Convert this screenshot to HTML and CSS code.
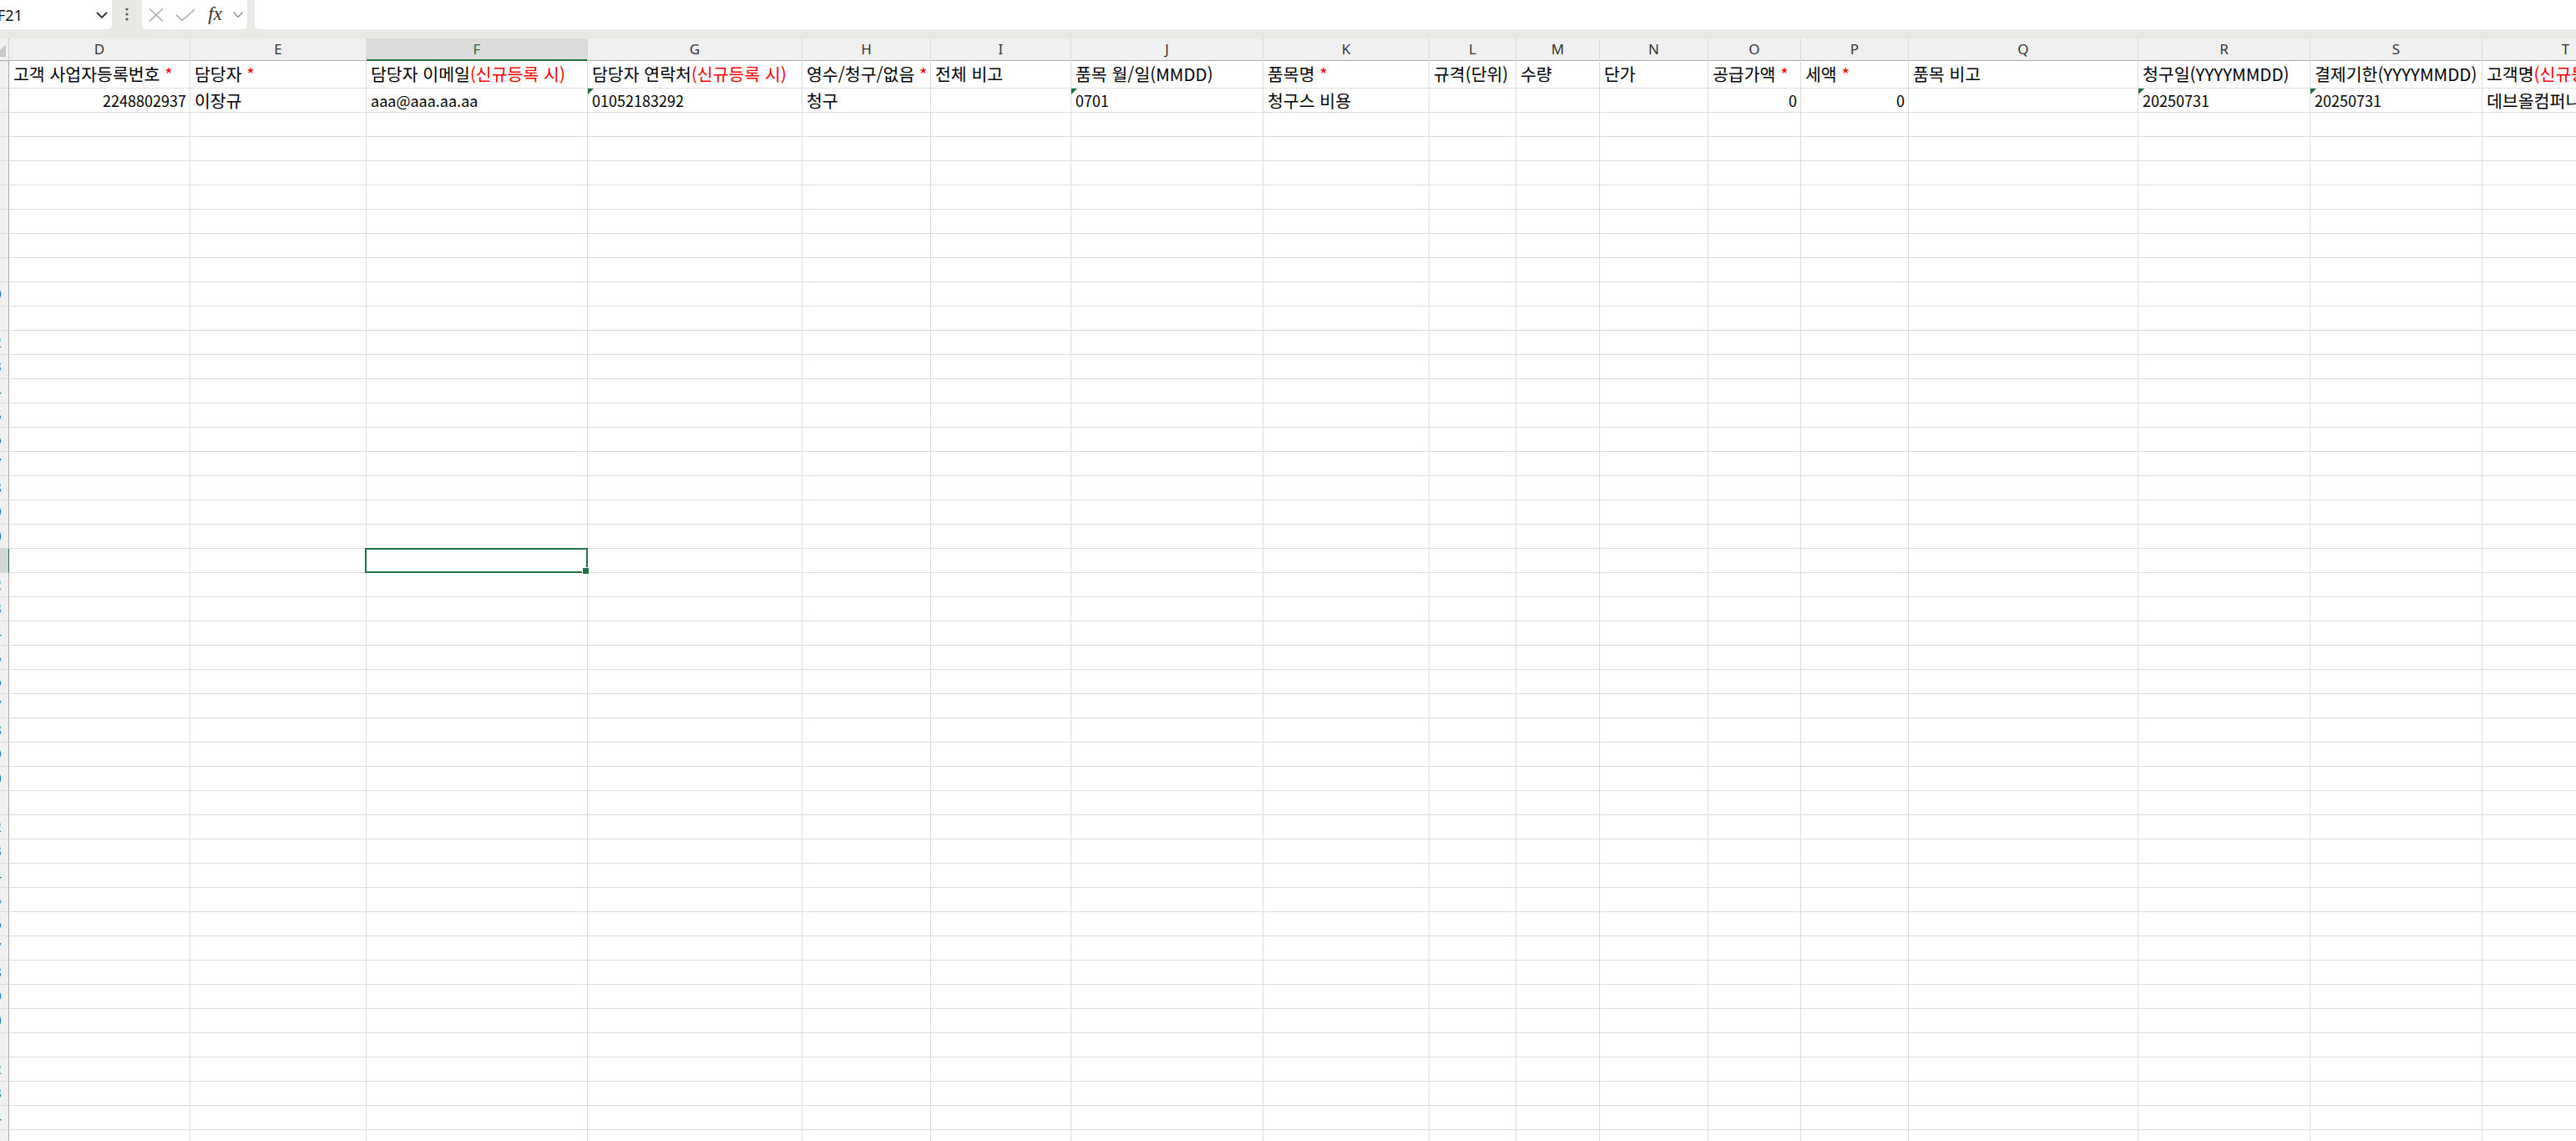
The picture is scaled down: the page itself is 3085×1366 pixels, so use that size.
FILE: index.html
```html
<!DOCTYPE html>
<html lang="ko">
    <head>
        <meta charset="UTF-8" />
        <title>청구 업로드 - Excel</title>
        <meta name="viewport" content="width=device-width, initial-scale=1.0" />
        <link rel="stylesheet" href="styles.css">
    </head>
    <body>
        <div class="formula-bar">
            <div class="name-box">
                <span class="name-box-ref">F21</span>
                <svg class="name-box-arrow" viewBox="0 0 14 8" width="14" height="8">
                    <path d="M1 1l6 6 6-6" />
                </svg>
            </div>
            <div class="bar-grip">
                <svg viewBox="0 0 4 16" width="4" height="16">
                    <circle cx="2" cy="2" r="1.6" />
                    <circle cx="2" cy="8" r="1.6" />
                    <circle cx="2" cy="14" r="1.6" />
                </svg>
            </div>
            <div class="fx-buttons">
                <span class="fx-btn">
                    <svg viewBox="0 0 18 16" width="18" height="16">
                        <path d="M1 0.5l16 15M17 0.5l-16 15" />
                    </svg>
                </span>
                <span class="fx-btn">
                    <svg viewBox="0 0 24 14" width="24" height="14">
                        <path d="M1 6.5l7 7 15-13" />
                    </svg>
                </span>
                <span class="fx-btn fx-label">fx</span>
                <span class="fx-btn fx-more">
                    <svg viewBox="0 0 12 7" width="12" height="7">
                        <path d="M0.5 0.5l5.5 6 5.5-6" />
                    </svg>
                </span>
            </div>
            <div class="formula-input"></div>
        </div>

        <div class="sheet">
            <div class="row col-heads">
                <div class="corner"></div>
                <div class="col-head">D</div>
                <div class="col-head">E</div>
                <div class="col-head active">F</div>
                <div class="col-head">G</div>
                <div class="col-head">H</div>
                <div class="col-head">I</div>
                <div class="col-head">J</div>
                <div class="col-head">K</div>
                <div class="col-head">L</div>
                <div class="col-head">M</div>
                <div class="col-head">N</div>
                <div class="col-head">O</div>
                <div class="col-head">P</div>
                <div class="col-head">Q</div>
                <div class="col-head">R</div>
                <div class="col-head">S</div>
                <div class="col-head">T</div>
            </div>

            <div class="row row-title">
                <div class="row-head"><span>1</span></div>
                <div class="cell">고객 사업자등록번호 <span class="req">*</span></div>
                <div class="cell">담당자 <span class="req">*</span></div>
                <div class="cell">담당자 이메일<span class="req">(신규등록 시)</span></div>
                <div class="cell">담당자 연락처<span class="req">(신규등록 시)</span></div>
                <div class="cell">영수/청구/없음 <span class="req">*</span></div>
                <div class="cell">전체 비고</div>
                <div class="cell">품목 월/일(MMDD)</div>
                <div class="cell">품목명 <span class="req">*</span></div>
                <div class="cell">규격(단위)</div>
                <div class="cell">수량</div>
                <div class="cell">단가</div>
                <div class="cell">공급가액 <span class="req">*</span></div>
                <div class="cell">세액 <span class="req">*</span></div>
                <div class="cell">품목 비고</div>
                <div class="cell">청구일(YYYYMMDD)</div>
                <div class="cell">결제기한(YYYYMMDD)</div>
                <div class="cell">고객명<span class="req">(신규등록 시)</span></div>
            </div>

            <div class="row">
                <div class="row-head"><span>2</span></div>
                <div class="cell num">2248802937</div>
                <div class="cell">이장규</div>
                <div class="cell latin">aaa@aaa.aa.aa</div>
                <div class="cell as-text">01052183292</div>
                <div class="cell">청구</div>
                <div class="cell"></div>
                <div class="cell as-text">0701</div>
                <div class="cell">청구스 비용</div>
                <div class="cell"></div>
                <div class="cell"></div>
                <div class="cell"></div>
                <div class="cell num">0</div>
                <div class="cell num">0</div>
                <div class="cell"></div>
                <div class="cell as-text">20250731</div>
                <div class="cell as-text">20250731</div>
                <div class="cell">데브올컴퍼니</div>
            </div>
        </div>

        <script src="script.js"></script>
    </body>
</html>
```

FILE: styles.css
```css
* {
    margin: 0;
    padding: 0;
    box-sizing: border-box;
}

html,
body {
    height: 100%;
    overflow: hidden;
    background: #fff;
}

body {
    font-family: "Noto Sans CJK KR", "Noto Sans", sans-serif;
    color: #000;
}

/* formula bar */

.formula-bar {
    display: flex;
    align-items: flex-start;
    height: 46px;
    background: #e7eae4;
}

.name-box {
    display: flex;
    align-items: center;
    justify-content: space-between;
    width: 141px;
    height: 35px;
    margin-left: -7px;
    padding: 0 5px 0 4px;
    background: #fff;
    border-radius: 0 0 6px 6px;
}

.name-box-ref {
    font-family: "Noto Sans", sans-serif;
    font-size: 18px;
    color: #111;
}

.name-box-arrow path {
    fill: none;
    stroke: #333;
    stroke-width: 1.8;
}

.bar-grip {
    display: flex;
    justify-content: center;
    width: 36px;
    padding-top: 9px;
}

.bar-grip circle {
    fill: #555;
}

.fx-buttons {
    display: flex;
    align-items: center;
    width: 126px;
    height: 35px;
    background: #fff;
    border-radius: 0 0 6px 6px;
}

.fx-btn {
    display: flex;
    justify-content: center;
    width: 34px;
}

.fx-btn:nth-child(2) {
    width: 38px;
}

.fx-btn path {
    fill: none;
    stroke: #a3a3a3;
    stroke-width: 1.3;
}

.fx-label {
    font-family: "Liberation Serif", serif;
    font-style: italic;
    font-size: 23px;
    color: #3b2c2c;
    line-height: 1;
    padding-bottom: 3px;
}

.fx-more {
    width: 22px;
}

.fx-more path {
    stroke: #8a8a8a;
}

.formula-input {
    flex: 1;
    height: 35px;
    margin-left: 9px;
    background: #fff;
    border-radius: 0 0 0 6px;
}

/* grid */

.sheet {
    --cols: 11px 217px 211px 265px 257px 154px 168px 230px 199px 104px
        100px 130px 111px 129px 275px 206px 206px 200px;
    width: max-content;
}

.row {
    display: grid;
    grid-template-columns: var(--cols);
    height: 29px;
}

.col-heads {
    height: 26px;
    background: #f0f0f0;
}

.corner {
    position: relative;
    border-right: 1px solid #cfcfcf;
    border-bottom: 1px solid #ababab;
}

.corner::after {
    content: "";
    position: absolute;
    right: 3px;
    bottom: 4px;
    border-bottom: 15px solid #c9c9c9;
    border-left: 15px solid transparent;
}

.col-head {
    border-right: 1px solid #d7d7d7;
    border-bottom: 1px solid #ababab;
    font-family: "Noto Sans", sans-serif;
    font-size: 17px;
    line-height: 25px;
    text-align: center;
    color: #333;
}

.col-head.active {
    background: #dcdcdc;
    color: #1e6c41;
    border-bottom: 2px solid #217346;
}

.row-title {
    height: 34px;
}

.row-head {
    display: flex;
    justify-content: flex-end;
    overflow: hidden;
    background: #f0f0f0;
    border-right: 1px solid #a9a9a9;
    border-bottom: 1px solid #dcdcdc;
}

/* only the right edge of the row numbers shows at this scroll position */
.row-head span {
    flex-shrink: 0;
    width: 40px;
    margin-right: -2px;
    font-family: "Noto Sans", sans-serif;
    font-size: 17px;
    line-height: 28px;
    text-align: center;
    color: #1d5ea8;
}

.row-head.active {
    background: #d6d6d6;
    border-right-color: #217346;
}

.cell {
    position: relative;
    padding: 0 5px;
    border-right: 1px solid #dcdcdc;
    border-bottom: 1px solid #dcdcdc;
    font-size: 20.5px;
    line-height: 28px;
    white-space: nowrap;
    overflow: hidden;
}

.row-title .cell {
    line-height: 33px;
}

/* plain numbers and ascii values read smaller than hangul */
.cell.num,
.cell.as-text,
.cell.latin {
    font-size: 18px;
}

.cell.num {
    text-align: right;
    padding-right: 4px;
}

.req {
    color: #f00;
}

/* number stored as text marker */
.cell.as-text::before {
    content: "";
    position: absolute;
    top: 0;
    left: 0;
    border-top: 7px solid #1d6b3f;
    border-right: 7px solid transparent;
}

.cell.selected {
    overflow: visible;
    z-index: 2;
}

.cell.selected::after {
    content: "";
    position: absolute;
    top: -1px;
    left: -2px;
    right: -1px;
    bottom: -1px;
    border: 2px solid #217346;
}

.cell.selected::before {
    content: "";
    position: absolute;
    right: -3px;
    bottom: -3px;
    width: 7px;
    height: 7px;
    background: #217346;
    border: 1px solid #fff;
    z-index: 1;
}
```

FILE: script.js
```js
// empty rows under the data, enough to fill the window
const sheet = document.querySelector(".sheet");
const COLUMN_COUNT = 17;
const ACTIVE_ROW = 21;
const ACTIVE_COL = 2; // F

for (let r = 3; r <= 46; r++) {
    const row = document.createElement("div");
    row.className = "row";

    const head = document.createElement("div");
    head.className = "row-head";
    if (r === ACTIVE_ROW) head.classList.add("active");
    head.innerHTML = "<span>" + r + "</span>";
    row.appendChild(head);

    for (let c = 0; c < COLUMN_COUNT; c++) {
        const cell = document.createElement("div");
        cell.className = "cell";
        if (r === ACTIVE_ROW && c === ACTIVE_COL) cell.classList.add("selected");
        row.appendChild(cell);
    }

    sheet.appendChild(row);
}
```
